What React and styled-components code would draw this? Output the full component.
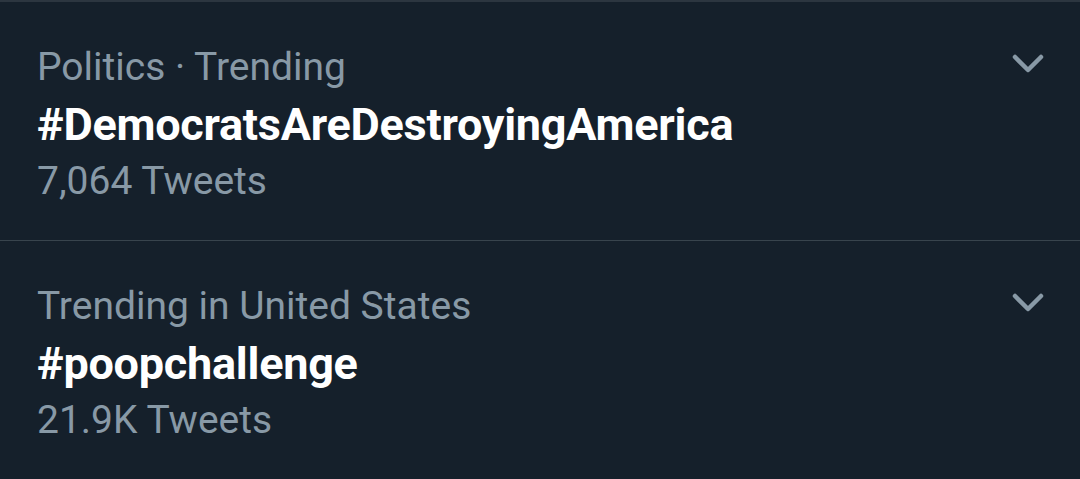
import React from "react";
import styled, { createGlobalStyle } from "styled-components";

const Global = createGlobalStyle`
  html, body { margin: 0; padding: 0; background: #15202b; }
  body { font-family: Roboto, "Noto Sans", sans-serif; -webkit-font-smoothing: antialiased; }
`;

const List = styled.div`
  width: 1080px;
  height: 479px;
  background: #15202b;
  border-top: 2px solid #2c3640;
  box-sizing: border-box;
  overflow: hidden;
`;

const Item = styled.div`
  display: flex;
  align-items: flex-start;
  justify-content: space-between;
  padding: 37px 35px 30px 37px;
  border-bottom: ${(p) => (p.$last ? "none" : "1px solid #38444d")};
`;

const Texts = styled.div`
  display: flex;
  flex-direction: column;
`;

const Meta = styled.div`
  color: #8899a6;
  font-size: 39px;
  line-height: 57px;
  font-weight: 400;
  white-space: nowrap;
`;

const Title = styled.div`
  color: #ffffff;
  font-size: 45px;
  line-height: 57px;
  font-weight: 700;
  white-space: nowrap;
  letter-spacing: -0.25px;
`;

const Chevron = styled.svg`
  width: 34px;
  height: 22px;
  margin-top: 14px;
  flex: none;
`;

const trends = [
  { meta: "Politics · Trending", title: "#DemocratsAreDestroyingAmerica", count: "7,064 Tweets" },
  { meta: "Trending in United States", title: "#poopchallenge", count: "21.9K Tweets" },
];

export default function App() {
  return (
    <>
      <Global />
      <List>
        {trends.map((t, i) => (
          <Item key={i} $last={i === trends.length - 1}>
            <Texts>
              <Meta>{t.meta}</Meta>
              <Title>{t.title}</Title>
              <Meta>{t.count}</Meta>
            </Texts>
            <Chevron viewBox="0 0 34 22">
              <path d="M4 4 L17 17 L30 4" fill="none" stroke="#8899a6" strokeWidth="4.5" strokeLinecap="round" strokeLinejoin="round" />
            </Chevron>
          </Item>
        ))}
      </List>
    </>
  );
}
